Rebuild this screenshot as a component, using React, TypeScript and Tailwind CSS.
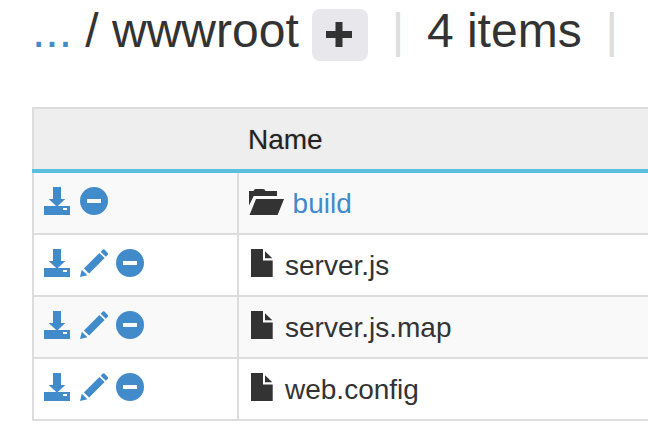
import type { ReactNode } from "react";

function DownloadIcon() {
  return (
    <svg className="block h-7 w-7" viewBox="0 0 28 28" fill="#428bca">
      <path d="M9 0h8v12h4.3L13 19.8 4.7 12H9z" />
      <path fillRule="evenodd" d="M0 19h26v9H0zM19 21v2h4v-2z" />
    </svg>
  );
}

function PencilIcon() {
  return (
    <svg className="block h-7 w-7" viewBox="0 0 28 28" fill="#428bca">
      <path d="M0 28 1.8 20.8 7.4 26.2z" />
      <path d="M3.9 19.4 19.4 3.9 24.6 9.1 9.1 24.6z" />
      <path d="M20.7 2.7 22.8.6Q23.6-.2 24.5.6L27.8 4Q28.6 4.8 27.8 5.7L25.8 7.8z" />
    </svg>
  );
}

function RemoveIcon() {
  return (
    <svg className="block h-7 w-7" viewBox="0 0 28 28" fill="#428bca">
      <path fillRule="evenodd" d="M14 0a14 14 0 1 1 0 28 14 14 0 0 1 0-28zM7 12v4h14v-4z" />
    </svg>
  );
}

function FolderIcon() {
  return (
    <svg className="block h-7 w-[35px] shrink-0" viewBox="0 0 35 28" fill="#333">
      <path d="M0 4h4.5Q5 2 7 2h7q2 0 2.5 2H28v5H4.7L0 18.5z" />
      <path d="M7 12h28L28.6 28H.5z" />
    </svg>
  );
}

function FileIcon() {
  return (
    <svg className="block h-7 w-7 shrink-0" viewBox="0 0 28 28" fill="#333">
      <path d="M2 0h12v11.5h9.7V28H2z" />
      <path d="M16 2.2 23.3 9.2H16z" />
    </svg>
  );
}

interface Entry {
  name: string;
  folder?: boolean;
}

const entries: Entry[] = [
  { name: "build", folder: true },
  { name: "server.js" },
  { name: "server.js.map" },
  { name: "web.config" },
];

function Separator() {
  return <span className="text-[#ddd]">|</span>;
}

function Row({ striped, actions, children }: { striped: boolean; actions: ReactNode; children: ReactNode }) {
  return (
    <div className={`flex h-[62px] border-b-2 border-[#ddd] ${striped ? "bg-[#f9f9f9]" : "bg-white"}`}>
      <div className="flex w-[205px] shrink-0 gap-[7.8px] border-r-2 border-[#ddd] pt-3.5 pl-2.5">{actions}</div>
      <div className="flex grow pt-3.5 pl-2.5">{children}</div>
    </div>
  );
}

export default function App() {
  return (
    <div className="h-[441px] w-[648px] overflow-hidden bg-white font-['Liberation_Sans',Arial,sans-serif] text-[#333]">
      <header className="flex h-[107px] pt-1 pl-8 text-[48px] leading-[54px] whitespace-pre">
        <a className="text-[#428bca]">...</a>
        <span> / wwwroot </span>
        <button className="mt-[5px] mr-[23.6px] flex h-[52px] w-14 shrink-0 items-start rounded-lg bg-[#e8e7ec] pt-[13px] pl-3.5" aria-label="Add">
          <svg className="block h-[25px] w-[26px]" viewBox="0 0 26 25" fill="#333">
            <path d="M9.5 0h7v9H26v7h-9.5v9h-7v-9H0V9h9.5z" />
          </svg>
        </button>
        <Separator />
        <span className="mr-[23.8px] ml-[22.8px]">4 items</span>
        <Separator />
      </header>

      <main className="ml-8 border-t-2 border-l-2 border-[#ddd]">
        <div className="-ml-0.5 border-b-4 border-[#5bc0de]">
          <div className="h-[60px] border-l-2 border-[#ddd] bg-[#eee] pl-[214px] text-[28px] leading-[62px] text-[#222] [text-shadow:0_0_2px_rgba(0,0,0,0.2)]">
            Name
          </div>
        </div>
        {entries.map((entry, index) => (
          <Row
            key={entry.name}
            striped={index % 2 === 0}
            actions={
              <>
                <DownloadIcon />
                {!entry.folder && <PencilIcon />}
                <RemoveIcon />
              </>
            }
          >
            {entry.folder ? <FolderIcon /> : <FileIcon />}
            <span className={`text-[28px] leading-[34px] ${entry.folder ? "ml-[8.6px] text-[#428bca]" : "ml-2"}`}>{entry.name}</span>
          </Row>
        ))}
      </main>
    </div>
  );
}
